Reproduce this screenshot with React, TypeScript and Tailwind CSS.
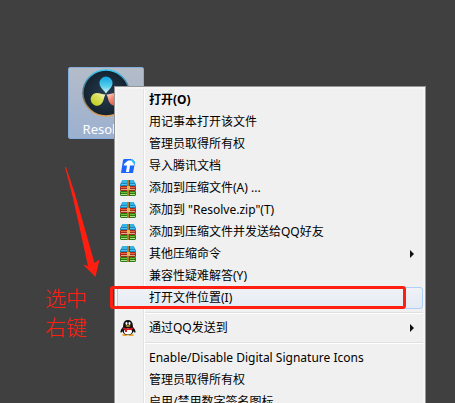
import React from 'react';

type MenuEntry = {
  label: string;
  icon?: 'docs' | 'archive' | 'qq';
  bold?: boolean;
  submenu?: boolean;
  selected?: boolean;
};

const groups: MenuEntry[][] = [
  [
    { label: '打开(O)', bold: true },
    { label: '用记事本打开该文件' },
    { label: '管理员取得所有权' },
    { label: '导入腾讯文档', icon: 'docs' },
    { label: '添加到压缩文件(A) ...', icon: 'archive' },
    { label: '添加到 "Resolve.zip"(T)', icon: 'archive' },
    { label: '添加到压缩文件并发送给QQ好友', icon: 'archive' },
    { label: '其他压缩命令', icon: 'archive', submenu: true },
    { label: '兼容性疑难解答(Y)' },
    { label: '打开文件位置(I)', selected: true },
  ],
  [{ label: '通过QQ发送到', icon: 'qq', submenu: true }],
  [
    { label: 'Enable/Disable Digital Signature Icons' },
    { label: '管理员取得所有权' },
    { label: '启用/禁用数字签名图标' },
  ],
];

function DocsIcon() {
  return (
    <svg viewBox="0 0 16 16" className="h-4 w-4" aria-hidden="true">
      <path d="M4 1h8l3 3-2 11H1L3 2z" fill="#1a66ff" />
      <path d="M11 1h1l3 3-.5 2L11 4z" fill="#1cc8f5" />
      <path d="M4 6l4-3.500h3L14 6l-.3 1.500H10L9 14H6l1-6.500H3.800z" fill="#fff" />
    </svg>
  );
}

function ArchiveIcon() {
  return (
    <svg viewBox="0 0 16 16" className="h-4 w-4" aria-hidden="true">
      <path d="M2.500 0h11L16 4.500V6H0V4.500z" fill="#1b86bd" />
      <path d="M2.500 0h11l1.500 3H1z" fill="#35b4e6" />
      <path d="M1 4h14v1H1z" fill="#4cc4ee" />
      <path d="M.5 6h15l.5 1v3l-.5 1H.5L0 10V7z" fill="#a52c18" />
      <path d="M1 7h14v1H1z" fill="#e8663c" />
      <path d="M1 9h14v1H1z" fill="#d8a890" />
      <path d="M.5 11h15l.5 1v3l-1 1H1l-1-1v-3z" fill="#2c7a12" />
      <path d="M1 12h14v1H1z" fill="#6cc030" />
      <path d="M1 14h14v1H1z" fill="#b4dc90" />
      <path d="M7 0h2v16H7z" fill="#b07c30" />
      <path d="M9 0h1v16H9z" fill="#6c4418" />
      <path d="M7 6h3v4H7z" fill="#e4b850" />
    </svg>
  );
}

function QQIcon() {
  return (
    <svg viewBox="0 0 16 16" className="h-4 w-4" aria-hidden="true">
      <ellipse cx="5" cy="15" rx="3" ry="1" fill="#f0a020" />
      <ellipse cx="11" cy="15" rx="3" ry="1" fill="#f0a020" />
      <path d="M8 0C5 0 3.200 2 3.200 5L3 7C1.500 8.500 0 11 .6 12.500c.5.500 1.400-.5 1.900-1.200C3 13.500 5 15 8 15s5-1.500 5.500-3.700c.5.700 1.400 1.700 1.900 1.200.6-1.500-.9-4-2.400-5.500l-.2-2C12.800 2 11 0 8 0z" fill="#111" />
      <ellipse cx="8" cy="11.500" rx="4" ry="3" fill="#fff" />
      <ellipse cx="6.500" cy="3.500" rx="1" ry="1.400" fill="#fff" />
      <ellipse cx="9.500" cy="3.500" rx="1" ry="1.400" fill="#fff" />
      <ellipse cx="8" cy="6" rx="2.500" ry=".8" fill="#f5a81c" />
      <path d="M3 7.500c3 1.500 7 1.500 10 0l.4 1.400C11 10 9 10.200 7 10v2H5V9.600L2.600 8.900z" fill="#e8141c" />
    </svg>
  );
}

function ResolveIcon() {
  return (
    <svg viewBox="0 0 48 48" className="h-12 w-12" aria-hidden="true">
      <defs>
        <linearGradient id="ring" x1="0" y1="0" x2="0" y2="1">
          <stop offset="0" stopColor="#35c5f0" />
          <stop offset=".5" stopColor="#56636a" />
          <stop offset="1" stopColor="#e0a050" />
        </linearGradient>
        <radialGradient id="disc">
          <stop offset="0" stopColor="#263c50" />
          <stop offset="1" stopColor="#14222f" />
        </radialGradient>
        <linearGradient id="blue" x1="0" y1="0" x2="0" y2="1">
          <stop offset="0" stopColor="#10a4e0" />
          <stop offset=".6" stopColor="#5cd0ec" />
          <stop offset="1" stopColor="#e4fafa" />
        </linearGradient>
        <linearGradient id="lime" x1="0" y1="1" x2="1" y2="0">
          <stop offset="0" stopColor="#b8cc10" />
          <stop offset=".6" stopColor="#dce060" />
          <stop offset="1" stopColor="#fcfce0" />
        </linearGradient>
        <linearGradient id="coral" x1="1" y1="1" x2="0" y2="0">
          <stop offset="0" stopColor="#e03820" />
          <stop offset=".6" stopColor="#f48870" />
          <stop offset="1" stopColor="#ffe8e0" />
        </linearGradient>
      </defs>
      <circle cx="24" cy="24" r="23" fill="url(#disc)" stroke="url(#ring)" strokeWidth="1.500" />
      <path d="M24 24.500c-1.500-3-6.500-5.500-6.500-10.500a6.500 6.500 0 0 1 13 0c0 5-5 7.500-6.500 10.500z" fill="url(#blue)" />
      <path d="M23.500 25.500c-2 2.700-1.400 8.200-5.600 10.600a6.500 6.500 0 0 1-6.500-11.200c4.300-2.500 8.700.9 12.100.6z" fill="url(#lime)" />
      <path d="M24.500 25.500c2 2.700 1.400 8.200 5.600 10.600a6.500 6.500 0 0 0 6.500-11.200c-4.300-2.500-8.700.9-12.100.6z" fill="url(#coral)" />
    </svg>
  );
}

const icons = { docs: DocsIcon, archive: ArchiveIcon, qq: QQIcon };

function MenuItem({ label, icon, bold, submenu, selected }: MenuEntry) {
  const Icon = icon && icons[icon];
  return (
    <button
      type="button"
      role="menuitem"
      className={`flex h-[22px] w-full items-center rounded-[3px] border text-left text-xs whitespace-nowrap ${
        selected ? 'border-[#aecff7] bg-linear-to-b from-[#f0f2f5] to-[#e4eaf4]' : 'border-transparent'
      } ${bold ? 'font-bold' : ''}`}
    >
      <span className="flex w-[31px] shrink-0 pl-[2px]">{Icon && <Icon />}</span>
      <span className="flex-1">{label}</span>
      {submenu && (
        <svg viewBox="0 0 4 8" className="mr-2 h-2 w-1" aria-hidden="true">
          <path d="M0 0l4 4-4 4z" fill="#111" />
        </svg>
      )}
    </button>
  );
}

function ContextMenu() {
  return (
    <div role="menu" className="w-[312px] border border-[#979797] bg-[#f5f5f5] p-[2px] text-black">
      <div className="bg-[#f0f0f0] bg-[linear-gradient(to_right,#e2e2e2_1px,#fff_1px)] bg-[length:2px_100%] bg-[position:26px_0] bg-no-repeat">
        {groups.map((group, i) => (
          <React.Fragment key={i}>
            {i > 0 && (
              <div role="separator" className="ml-7 flex h-2 items-center">
                <div className="h-[2px] w-full border-t border-[#e0e0e0] bg-white" />
              </div>
            )}
            {group.map((entry) => (
              <MenuItem key={entry.label} {...entry} />
            ))}
          </React.Fragment>
        ))}
      </div>
    </div>
  );
}

export default function App() {
  return (
    <main className="relative h-screen overflow-hidden bg-[#404040] font-['Noto_Sans','Noto_Sans_CJK_SC',sans-serif]">
      <button
        type="button"
        className="absolute top-[67px] left-[68px] flex h-[72px] w-[76px] flex-col items-center rounded-[2px] border border-[#84acdd] bg-linear-to-b from-[#b4bcc8] to-[#9cb0d0] pt-px text-[13px] leading-4 text-white"
      >
        <ResolveIcon />
        <span className="mt-1">Resolve</span>
      </button>

      <div className="absolute top-[86px] left-[114px]">
        <ContextMenu />
      </div>

      <div className="absolute top-[286px] left-[110px] h-[23px] w-[296px] rounded-[3px] border-3 border-[#ff1e10]" />

      <svg viewBox="0 0 36 112" className="absolute top-[166px] left-[64px] h-28 w-9" aria-hidden="true">
        <path d="M1 1h1l9 27 19.500 69 5-3.500-4 17.500L19 98.500l5 1.500L9 32z" fill="#ff1e10" />
      </svg>
      <p className="absolute top-[284px] left-[45px] text-[21px] leading-[29px] font-light text-[#ff1e10]">
        选中
        <br />
        右键
      </p>
    </main>
  );
}
